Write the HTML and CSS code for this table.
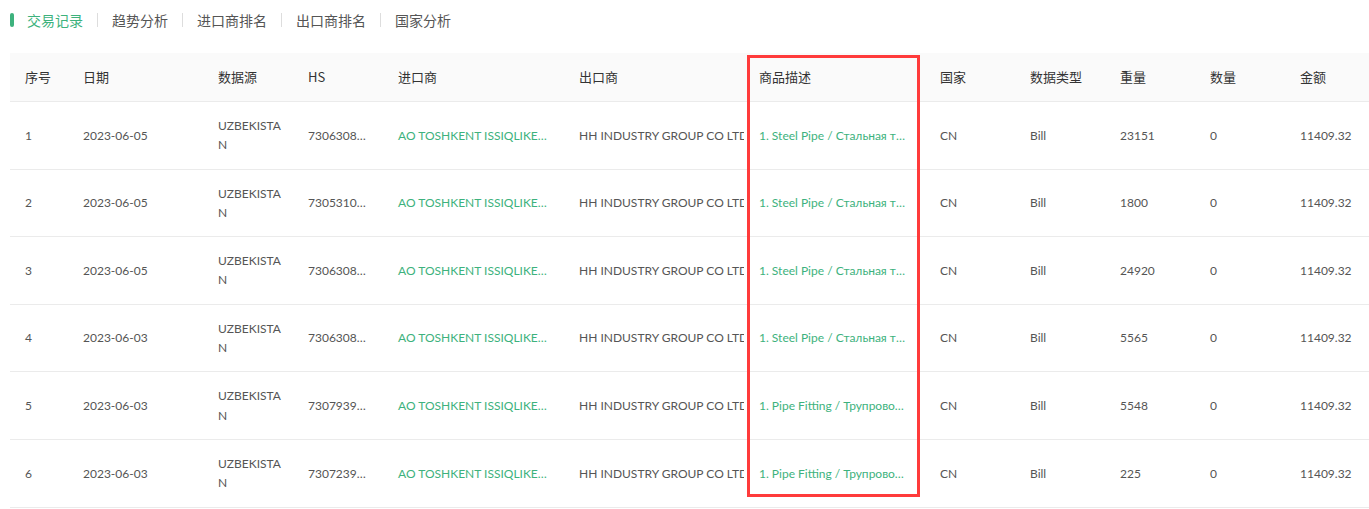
FILE: index.html
```html
<!DOCTYPE html>
<html lang="zh-CN">
<head>
    <meta charset="UTF-8">
    <meta name="viewport" content="width=device-width, initial-scale=1.0">
    <title>交易记录</title>
    <link rel="stylesheet" href="styles.css">
</head>
<body>

    <div class="tabs">
        <span class="tab active">交易记录</span>
        <span class="tab">趋势分析</span>
        <span class="tab">进口商排名</span>
        <span class="tab">出口商排名</span>
        <span class="tab">国家分析</span>
    </div>

    <div class="table-wrap">
        <table class="records">
            <colgroup>
                <col style="width:58px">
                <col style="width:135px">
                <col style="width:90px">
                <col style="width:90px">
                <col style="width:181px">
                <col style="width:180px">
                <col style="width:181px">
                <col style="width:90px">
                <col style="width:90px">
                <col style="width:90px">
                <col style="width:90px">
                <col style="width:90px">
            </colgroup>
            <thead>
                <tr>
                    <th>序号</th>
                    <th>日期</th>
                    <th>数据源</th>
                    <th>HS</th>
                    <th>进口商</th>
                    <th>出口商</th>
                    <th>商品描述</th>
                    <th>国家</th>
                    <th>数据类型</th>
                    <th>重量</th>
                    <th>数量</th>
                    <th>金额</th>
                </tr>
            </thead>
            <tbody>
                <tr>
                    <td>1</td>
                    <td>2023-06-05</td>
                    <td class="wrap">UZBEKISTAN</td>
                    <td class="ellipsis">7306308000</td>
                    <td class="ellipsis link">AO TOSHKENT ISSIQLIKELEKTRMARKAZI</td>
                    <td class="clip">HH INDUSTRY GROUP CO LTD</td>
                    <td class="ellipsis link">1. Steel Pipe / Стальная труба</td>
                    <td>CN</td>
                    <td>Bill</td>
                    <td>23151</td>
                    <td>0</td>
                    <td>11409.32</td>
                </tr>
                <tr>
                    <td>2</td>
                    <td>2023-06-05</td>
                    <td class="wrap">UZBEKISTAN</td>
                    <td class="ellipsis">7305310000</td>
                    <td class="ellipsis link">AO TOSHKENT ISSIQLIKELEKTRMARKAZI</td>
                    <td class="clip">HH INDUSTRY GROUP CO LTD</td>
                    <td class="ellipsis link">1. Steel Pipe / Стальная труба</td>
                    <td>CN</td>
                    <td>Bill</td>
                    <td>1800</td>
                    <td>0</td>
                    <td>11409.32</td>
                </tr>
                <tr>
                    <td>3</td>
                    <td>2023-06-05</td>
                    <td class="wrap">UZBEKISTAN</td>
                    <td class="ellipsis">7306308000</td>
                    <td class="ellipsis link">AO TOSHKENT ISSIQLIKELEKTRMARKAZI</td>
                    <td class="clip">HH INDUSTRY GROUP CO LTD</td>
                    <td class="ellipsis link">1. Steel Pipe / Стальная труба</td>
                    <td>CN</td>
                    <td>Bill</td>
                    <td>24920</td>
                    <td>0</td>
                    <td>11409.32</td>
                </tr>
                <tr>
                    <td>4</td>
                    <td>2023-06-03</td>
                    <td class="wrap">UZBEKISTAN</td>
                    <td class="ellipsis">7306308000</td>
                    <td class="ellipsis link">AO TOSHKENT ISSIQLIKELEKTRMARKAZI</td>
                    <td class="clip">HH INDUSTRY GROUP CO LTD</td>
                    <td class="ellipsis link">1. Steel Pipe / Стальная труба</td>
                    <td>CN</td>
                    <td>Bill</td>
                    <td>5565</td>
                    <td>0</td>
                    <td>11409.32</td>
                </tr>
                <tr>
                    <td>5</td>
                    <td>2023-06-03</td>
                    <td class="wrap">UZBEKISTAN</td>
                    <td class="ellipsis">7307939000</td>
                    <td class="ellipsis link">AO TOSHKENT ISSIQLIKELEKTRMARKAZI</td>
                    <td class="clip">HH INDUSTRY GROUP CO LTD</td>
                    <td class="ellipsis link">1. Pipe Fitting / Трупроводная арматура</td>
                    <td>CN</td>
                    <td>Bill</td>
                    <td>5548</td>
                    <td>0</td>
                    <td>11409.32</td>
                </tr>
                <tr>
                    <td>6</td>
                    <td>2023-06-03</td>
                    <td class="wrap">UZBEKISTAN</td>
                    <td class="ellipsis">7307239000</td>
                    <td class="ellipsis link">AO TOSHKENT ISSIQLIKELEKTRMARKAZI</td>
                    <td class="clip">HH INDUSTRY GROUP CO LTD</td>
                    <td class="ellipsis link">1. Pipe Fitting / Трупроводная арматура</td>
                    <td>CN</td>
                    <td>Bill</td>
                    <td>225</td>
                    <td>0</td>
                    <td>11409.32</td>
                </tr>
            </tbody>
        </table>

        <!-- annotation box over the description column -->
        <div class="highlight"></div>
    </div>

</body>
</html>
```

FILE: styles.css
```css
body {
    margin: 0;
    padding: 0;
    font-family: "Noto Sans CJK SC", sans-serif;
    font-size: 13px;
    color: #555;
    background: #fff;
    overflow: hidden;
}

/* Tabs */
.tabs {
    display: flex;
    align-items: center;
    margin: 10px 0 0 10px;
    height: 20px;
}

.tabs::before {
    content: "";
    width: 4px;
    height: 14px;
    border-radius: 2px;
    background: #3db27d;
}

.tab {
    font-size: 14px;
    line-height: 14px;
    color: #555;
    padding: 0 14px;
    border-left: 1px solid #ddd;
    cursor: pointer;
}

.tab:first-of-type {
    border-left: none;
    padding-left: 13px;
}

.tab.active {
    color: #3db27d;
}

/* Table */
.table-wrap {
    position: relative;
    margin-top: 23px;
    padding-left: 10px;
}

.records {
    table-layout: fixed;
    border-collapse: collapse;
    width: 1365px;
}

.records th {
    height: 46px;
    padding: 0 15px 2px;
    background: #fafafa;
    border-bottom: 1px solid #ebebeb;
    font-weight: normal;
    color: #333;
    text-align: left;
    white-space: nowrap;
}

.records td {
    padding: 14px 15px;
    font-family: Lato, "Noto Sans CJK SC", sans-serif;
    font-size: 12px;
    line-height: 19.3px;
    border-bottom: 1px solid #ebebeb;
    vertical-align: middle;
    white-space: nowrap;
    overflow: hidden;
}

.records td.wrap {
    padding-right: 8px;
    white-space: normal;
    word-break: break-all;
}

.records td.ellipsis {
    text-overflow: ellipsis;
}

.records td.clip {
    padding-right: 0;
}

.records td.link {
    color: #3db27d;
    cursor: pointer;
}

.highlight {
    position: absolute;
    left: 747px;
    top: 2px;
    width: 167px;
    height: 436px;
    border: 3px solid #ff3b3b;
    pointer-events: none;
}
```
